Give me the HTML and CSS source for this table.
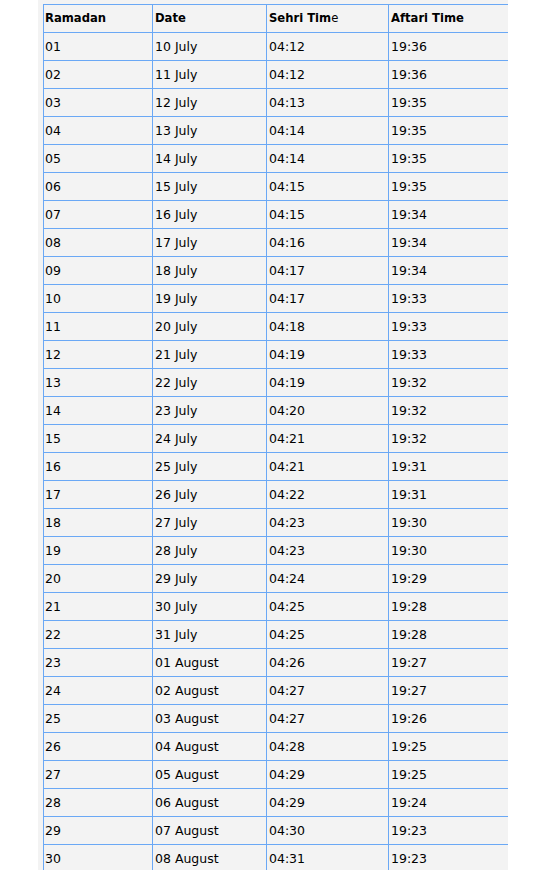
FILE: index.html
```html
<!DOCTYPE html>
<html>
<head>
<meta charset="utf-8">
<link rel="stylesheet" href="styles.css">
</head>
<body>
<div class="wrap">
<table class="times">
<colgroup><col class="c1"><col class="c2"><col class="c3"><col class="c4"></colgroup>
<thead>
<tr><th>Ramadan</th><th>Date</th><th><span class="b">Sehri Tim</span>e</th><th>Aftari Time</th></tr>
</thead>
<tbody>
<tr><td>01</td><td>10 July</td><td>04:12</td><td>19:36</td></tr>
<tr><td>02</td><td>11 July</td><td>04:12</td><td>19:36</td></tr>
<tr><td>03</td><td>12 July</td><td>04:13</td><td>19:35</td></tr>
<tr><td>04</td><td>13 July</td><td>04:14</td><td>19:35</td></tr>
<tr><td>05</td><td>14 July</td><td>04:14</td><td>19:35</td></tr>
<tr><td>06</td><td>15 July</td><td>04:15</td><td>19:35</td></tr>
<tr><td>07</td><td>16 July</td><td>04:15</td><td>19:34</td></tr>
<tr><td>08</td><td>17 July</td><td>04:16</td><td>19:34</td></tr>
<tr><td>09</td><td>18 July</td><td>04:17</td><td>19:34</td></tr>
<tr><td>10</td><td>19 July</td><td>04:17</td><td>19:33</td></tr>
<tr><td>11</td><td>20 July</td><td>04:18</td><td>19:33</td></tr>
<tr><td>12</td><td>21 July</td><td>04:19</td><td>19:33</td></tr>
<tr><td>13</td><td>22 July</td><td>04:19</td><td>19:32</td></tr>
<tr><td>14</td><td>23 July</td><td>04:20</td><td>19:32</td></tr>
<tr><td>15</td><td>24 July</td><td>04:21</td><td>19:32</td></tr>
<tr><td>16</td><td>25 July</td><td>04:21</td><td>19:31</td></tr>
<tr><td>17</td><td>26 July</td><td>04:22</td><td>19:31</td></tr>
<tr><td>18</td><td>27 July</td><td>04:23</td><td>19:30</td></tr>
<tr><td>19</td><td>28 July</td><td>04:23</td><td>19:30</td></tr>
<tr><td>20</td><td>29 July</td><td>04:24</td><td>19:29</td></tr>
<tr><td>21</td><td>30 July</td><td>04:25</td><td>19:28</td></tr>
<tr><td>22</td><td>31 July</td><td>04:25</td><td>19:28</td></tr>
<tr><td>23</td><td>01 August</td><td>04:26</td><td>19:27</td></tr>
<tr><td>24</td><td>02 August</td><td>04:27</td><td>19:27</td></tr>
<tr><td>25</td><td>03 August</td><td>04:27</td><td>19:26</td></tr>
<tr><td>26</td><td>04 August</td><td>04:28</td><td>19:25</td></tr>
<tr><td>27</td><td>05 August</td><td>04:29</td><td>19:25</td></tr>
<tr><td>28</td><td>06 August</td><td>04:29</td><td>19:24</td></tr>
<tr><td>29</td><td>07 August</td><td>04:30</td><td>19:23</td></tr>
<tr><td>30</td><td>08 August</td><td>04:31</td><td>19:23</td></tr>
</tbody>
</table>
</div>
</body>
</html>
```

FILE: styles.css
```css
html, body {
  margin: 0;
  padding: 0;
  background: #ffffff;
}
body {
  font-family: "DejaVu Sans", Verdana, sans-serif;
  font-size: 12.5px;
  color: #000000;
}
.wrap {
  margin-left: 38px;
  width: 470px;
  background: #f3f3f3;
  padding: 4px 0 0 5px;
  box-sizing: border-box;
  min-height: 870px;
}
.times {
  border-collapse: separate;
  border-spacing: 0;
  table-layout: fixed;
  width: 465px;
}
.c1 { width: 109px; }
.c2 { width: 114px; }
.c3 { width: 122px; }
.c4 { width: 120px; }
.times th,
.times td {
  box-sizing: border-box;
  height: 28px;
  border-top: 1px solid #6aa8f5;
  border-left: 1px solid #6aa8f5;
  padding: 7px 0 0 1px;
  line-height: 14px;
  vertical-align: top;
  text-align: left;
  white-space: nowrap;
}
.times td + td,
.times th + th {
  padding-left: 2px;
}
.times th {
  font-weight: bold;
  font-size: 11.6px;
  padding-top: 6px;
}
.times th .b {
  font-weight: bold;
}
.times th:nth-child(3) {
  font-weight: normal;
}
```
